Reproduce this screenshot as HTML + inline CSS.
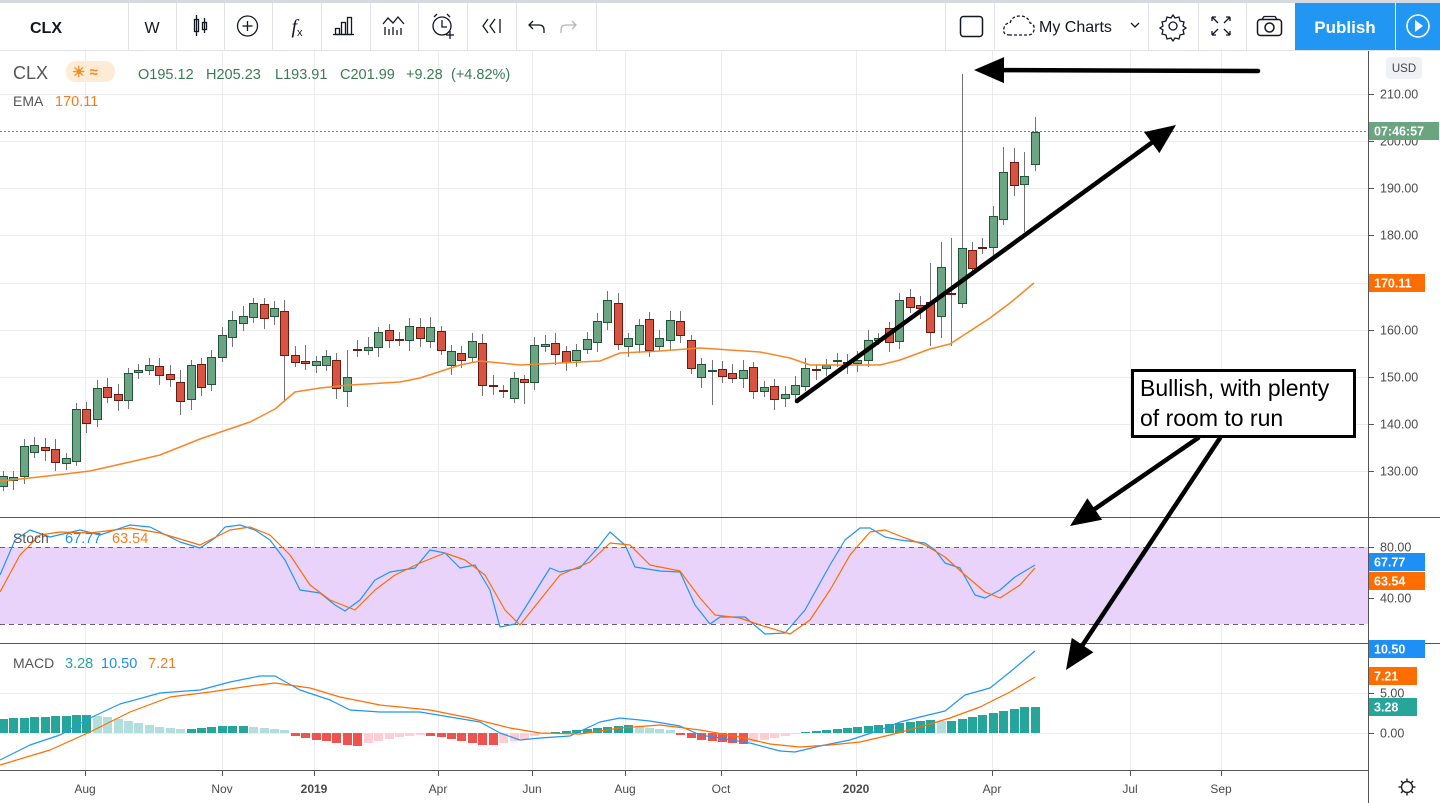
<!DOCTYPE html>
<html><head><meta charset="utf-8"><style>
html,body{margin:0;padding:0;width:1440px;height:803px;overflow:hidden;background:#fff;font-family:"Liberation Sans",sans-serif}
</style></head><body>
<svg id="s" width="1440" height="803" xmlns="http://www.w3.org/2000/svg" style="position:absolute;left:0;top:0">
</svg>
<script>
var s=document.getElementById('s'),h='';
function R(x,y,w,hh,f,st,sw){h+='<rect x="'+x+'" y="'+y+'" width="'+w+'" height="'+hh+'" fill="'+f+'"'+(st?' stroke="'+st+'" stroke-width="'+(sw||1)+'"':'')+'/>';}
function L(x1,y1,x2,y2,c,w,extra){h+='<line x1="'+x1+'" y1="'+y1+'" x2="'+x2+'" y2="'+y2+'" stroke="'+c+'" stroke-width="'+(w||1)+'" '+(extra||'')+'/>';}
function T(x,y,t,c,sz,extra){h+='<text x="'+x+'" y="'+y+'" fill="'+c+'" font-size="'+sz+'" '+(extra||'')+'>'+t+'</text>';}
function P(pts,c,w){h+='<polyline fill="none" stroke="'+c+'" stroke-width="'+(w||1)+'" stroke-linejoin="round" points="'+pts.map(function(p){return p.join(',')}).join(' ')+'"/>';}
var vx=[85,222,314,438,532,625,721,856,992,1130,1221];
vx.forEach(function(x){L(x+.5,50,x+.5,770,'#ececed');});
[94,141,188,235,283,330,377,424,471].forEach(function(y){L(0,y+.5,1368,y+.5,'#ececed');});
[598].forEach(function(y){L(0,y+.5,1368,y+.5,'#d9c3ee');});
[693,733].forEach(function(y){L(0,y+.5,1368,y+.5,'#ececed');});
L(0,131.5,1368,131.5,'#4e9a6a',1,'stroke-dasharray="2,2"');
R(0,547,1368,77,'#e9d3fb');
L(0,547.5,1368,547.5,'#6f5b7e',1,'stroke-dasharray="5,4"');
L(0,624.5,1368,624.5,'#6f5b7e',1,'stroke-dasharray="5,4"');
var d=[[476,486,'g'],[477,480,'g'],[446,476,'g'],[445,452,'g'],[447,450,'r'],[449,462,'r'],[458,463,'g'],[409,461,'g'],[409,423,'r'],[388,419,'g'],[387,397,'r'],[394,400,'r'],[373,400,'g'],[370,372,'g'],[365,370,'g'],[366,375,'r'],[374,379,'r'],[382,401,'r'],[365,399,'g'],[364,387,'r'],[357,384,'g'],[335,357,'g'],[320,337,'g'],[316,323,'g'],[303,317,'g'],[304,318,'r'],[308,316,'g'],[311,355,'r'],[355,362,'r'],[361,363,'r'],[361,365,'g'],[356,365,'g'],[360,388,'r'],[377,391,'g'],[349,350,'r'],[347,350,'g'],[332,347,'g'],[330,340,'r'],[339,340,'r'],[326,340,'g'],[327,338,'r'],[327,341,'g'],[331,350,'r'],[351,365,'g'],[353,360,'r'],[341,357,'g'],[343,385,'r'],[385,386,'r'],[390,391,'r'],[378,398,'g'],[379,382,'r'],[345,382,'g'],[344,346,'g'],[343,354,'r'],[351,362,'r'],[350,360,'g'],[339,349,'g'],[321,342,'g'],[300,322,'g'],[303,344,'r'],[338,346,'g'],[325,344,'g'],[319,350,'r'],[338,346,'g'],[320,340,'g'],[321,335,'r'],[340,368,'r'],[364,377,'g'],[370,371,'g'],[369,376,'r'],[373,378,'r'],[370,378,'g'],[367,391,'r'],[387,391,'g'],[386,399,'r'],[394,398,'g'],[385,394,'g'],[368,386,'g'],[369,370,'r'],[365,368,'g'],[360,361,'g'],[362,363,'r'],[360,363,'g'],[340,360,'g'],[338,340,'g'],[328,342,'r'],[300,341,'g'],[297,307,'r'],[305,308,'r'],[302,332,'r'],[267,316,'g'],[293,294,'r'],[248,303,'g'],[250,268,'r'],[247,248,'r'],[216,247,'g'],[172,219,'g'],[162,185,'r'],[176,184,'g'],[132,164,'g']];
var wk={92:[74,308],99:[117,171],27:[300,402],29:[345,370],33:[350,407],17:[370,415],50:[375,404],68:[360,405],96:[147,225],97:[148,196],98:[152,232],90:[242,338],89:[263,346],91:[238,346]};
d.forEach(function(c,i){var x=Math.round(3+i*10.42);var hi=c[0]-5-(i*7%6),lo=c[1]+5+(i*5%7);if(wk[i]){hi=wk[i][0];lo=wk[i][1];}
L(x+.5,hi,x+.5,lo,'#737375');
var g=c[2]=='g';R(x-3.5,c[0]+.5,8,Math.max(1,c[1]-c[0]),g?'#6ba583':'#d75442',g?'#225437':'#6b1a12');});
P([[0,481],[30,478],[65,474],[90,471],[130,462],[160,455],[200,439],[250,422],[275,409],[295,392],[320,388],[350,385],[400,382],[420,378],[460,365],[480,361],[520,365],[540,364],[600,361],[620,353],[660,351],[700,348],[760,352],[790,358],[810,365],[880,365],[900,360],[930,349],[950,344],[970,331],[990,318],[1010,303],[1034,283]],'#f68727',1.5);
P([[0,575],[15,540],[30,530],[50,537],[80,530],[100,535],[130,525],[150,527],[180,542],[200,548],[215,538],[225,527],[240,525],[255,530],[270,540],[285,560],[300,590],[320,593],[335,605],[345,611],[360,600],[375,580],[390,572],[415,568],[430,550],[445,553],[460,568],[475,565],[490,590],[500,627],[515,624],[530,600],[550,568],[560,572],[580,568],[600,545],[610,532],[625,545],[635,567],[660,571],[680,572],[695,605],[710,624],[720,617],[745,617],[765,634],[785,633],[805,610],[830,565],[845,540],[860,528],[870,528],[885,537],[900,540],[925,543],[935,550],[945,563],[960,568],[975,595],[985,598],[1000,590],[1015,577],[1035,565]],'#2196f3',1.2);
P([[0,592],[20,555],[40,535],[60,532],[90,533],[130,528],[160,533],[200,545],[230,530],[250,527],[270,535],[290,555],[310,585],[330,600],[355,610],[375,590],[395,575],[420,563],[445,553],[465,560],[485,575],[505,610],[520,625],[540,600],[560,575],[590,562],[610,543],[630,545],[650,565],[680,571],[700,598],[715,615],[740,618],[760,625],[790,634],[810,620],[830,590],[850,555],[870,532],[885,530],[905,538],[925,545],[945,557],[965,575],[985,592],[1000,598],[1020,585],[1035,568]],'#ff6d00',1.2);
var hv=[14,15,15,16,16,17,17,18,18,17,16,14,12,10,8,6,5,4,4,5,6,7,7,7,6,5,4,3,-3,-5,-7,-8,-10,-12,-13,-10,-8,-6,-4,-3,-2,-3,-4,-6,-8,-10,-12,-12,-10,-8,-6,-3,-1,1,2,3,4,5,6,7,8,7,5,4,3,-2,-5,-7,-8,-9,-10,-11,-9,-7,-5,-3,-1,1,2,3,4,5,6,7,8,9,10,11,12,13,12,12,14,16,18,20,22,24,26,26];
hv.forEach(function(v,i){var x=Math.round(3+i*10.42)-4;var pv=i?hv[i-1]:v;var c;if(v>=0)c=v>=pv?'#26a69a':'#b2dfdb';else c=v<=pv?'#ef5350':'#ffcdd2';
if(v>=0)R(x,733-v,9,v,c);else R(x,733,9,-v,c);});
P([[0,760],[30,745],[60,735],[90,718],[120,704],[160,693],[200,690],[230,682],[260,676],[275,676],[300,690],[330,700],[350,710],[380,712],[420,712],[450,717],[480,722],[500,733],[520,740],[540,738],[570,736],[600,722],[620,718],[650,721],[680,726],[700,735],[720,738],[750,743],[780,751],[795,752],[820,746],[850,740],[880,730],[900,722],[920,717],[945,711],[965,695],[990,688],[1010,672],[1035,651]],'#2196f3',1.2);
P([[0,765],[50,750],[90,732],[130,712],[170,697],[210,692],[250,686],[275,683],[310,688],[340,697],[380,705],[430,710],[470,718],[510,728],[540,733],[580,734],[620,728],[660,725],[700,730],[740,737],[770,744],[800,747],[830,745],[860,742],[890,735],[920,727],[950,718],[980,707],[1010,692],[1035,677]],'#ff6d00',1.2);
L(0,517.5,1440,517.5,'#555',1);L(0,643.5,1440,643.5,'#555',1);
L(1368.5,50,1368.5,803,'#555',1);
R(0,770.5,1368,33,'#fff');L(0,770.5,1368,770.5,'#555',1);
vx.forEach(function(x){L(x+.5,771,x+.5,776,'#555');});
var tl=['Aug','Nov','2019','Apr','Jun','Aug','Oct','2020','Apr','Jul','Sep'];
vx.forEach(function(x,i){T(x,793,tl[i],'#4a4a4a',12,'text-anchor="middle"'+((tl[i]=='2019'||tl[i]=='2020')?' font-weight="bold"':''));});
var pl=[[94,'210.00'],[141,'200.00'],[188,'190.00'],[235,'180.00'],[330,'160.00'],[377,'150.00'],[424,'140.00'],[471,'130.00'],[547,'80.00'],[598,'40.00'],[693,'5.00'],[733,'0.00']];
pl.forEach(function(p){L(1369,p[0]+.5,1374,p[0]+.5,'#555');T(1380,p[0]+4.5,p[1],'#4a4a4a',12.5);});
function box(y,t,c,w){R(1369,y-9,w||56,18,c);T(1374,y+4.5,t,'#fff',12.5,'font-weight="bold"');}
box(131,'07:46:57','#6aa57f',70);box(283,'170.11','#ff6d00');box(562,'67.77','#1e8ff5');box(581,'63.54','#ff6d00');box(649,'10.50','#1e8ff5');box(676,'7.21','#ff6d00',48);box(707,'3.28','#26a69a',48);
h+='<rect x="1386" y="57" width="36" height="22" rx="4" fill="#eef1f6"/>';T(1404,72,'USD','#444',11.5,'text-anchor="middle"');
h+='<circle cx="1407" cy="787" r="5.5" fill="none" stroke="#222" stroke-width="1.4"/>';
for(var a=0;a<8;a++){var an=a*Math.PI/4;L(1407+Math.cos(an)*6,787+Math.sin(an)*6,1407+Math.cos(an)*8.5,787+Math.sin(an)*8.5,'#222',1.4);}
T(13,79,'CLX','#555',18);
h+='<rect x="66" y="61" width="49" height="21" rx="10" fill="#fdebd5"/>';T(72,77,'☀ ≈','#f68a22',15,'font-weight="bold"');
var lg=[[138,'O195.12'],[206,'H205.23'],[275,'L193.91'],[340,'C201.99'],[406,'+9.28'],[451,'(+4.82%)']];
lg.forEach(function(q){T(q[0],79,q[1],'#3c7a55',14.5);});
T(13,106,'EMA','#555',14);T(55,106,'170.11','#f47d1c',14.5);
T(13,543,'Stoch','#555',14);T(65,543,'67.77','#1e8ff5',14.5);T(112,543,'63.54','#f47d1c',14.5);
T(13,668,'MACD','#555',14);T(65,668,'3.28','#26a69a',14.5);T(101,668,'10.50','#1e8ff5',14.5);T(148,668,'7.21','#f47d1c',14.5);
function arrow(x1,y1,x2,y2){var dx=x2-x1,dy=y2-y1,l=Math.sqrt(dx*dx+dy*dy),ux=dx/l,uy=dy/l;var bx=x2-ux*30,by=y2-uy*30;
L(x1,y1,bx+ux*4,by+uy*4,'#000',4.5,'stroke-linecap="round"');
h+='<polygon points="'+x2+','+y2+' '+(bx-uy*13)+','+(by+ux*13)+' '+(bx+uy*13)+','+(by-ux*13)+'" fill="#000"/>';}
arrow(1258,71,974,70);arrow(797,401,1176,125);arrow(1198,438,1070,526);arrow(1220,438,1066,670);
R(1132.5,370.5,222,66,'#fff','#000',3);
T(1140,396,'Bullish, with plenty','#000',23);T(1140,426,'of room to run','#000',23);
R(0,0,1440,50,'#fff');R(0,0,1440,3,'#d6d9e0');L(0,50.5,1440,50.5,'#e0e3eb');
[128,176,224,272,321,370,418,467,516,596,945,994,1148,1198,1246].forEach(function(x){L(x+.5,3,x+.5,50,'#e0e3eb');});
T(30,33,'CLX','#131722',16,'font-weight="bold"');T(152,33,'W','#131722',16,'text-anchor="middle"');
h+='<g stroke="#131722" fill="none" stroke-width="1.3"><rect x="194.5" y="19.5" width="4" height="12"/><line x1="196.5" y1="15" x2="196.5" y2="36"/><rect x="202.5" y="22.5" width="4" height="7"/><line x1="204.5" y1="18" x2="204.5" y2="33"/>'+
'<circle cx="247.5" cy="26" r="10"/><line x1="247.5" y1="21" x2="247.5" y2="31"/><line x1="242.5" y1="26" x2="252.5" y2="26"/>'+
'<rect x="335.5" y="28.5" width="4" height="6"/><rect x="341.5" y="22.5" width="4" height="12"/><rect x="347.5" y="17.5" width="4" height="17"/><line x1="333" y1="34.5" x2="354" y2="34.5"/>'+
'<polyline points="383,24 388,18 393,23 398,17 404,24"/><line x1="385" y1="27" x2="385" y2="35"/><line x1="389" y1="29" x2="389" y2="35"/><line x1="393" y1="27" x2="393" y2="35"/><line x1="397" y1="30" x2="397" y2="35"/><line x1="401" y1="28" x2="401" y2="35"/>'+
'<circle cx="442" cy="26" r="9"/><polyline points="442,20 442,27 447,27"/><path d="M434 17 l3 -3 M450 17 l-3 -3"/><line x1="450" y1="31" x2="450" y2="39"/><line x1="446" y1="35" x2="454" y2="35"/>'+
'<path d="M488 19 l-5 7 l5 7 M495 19 l-5 7 l5 7 M500 19 v14"/>'+
'<path d="M533 21 l-4 4 l4 4 M529 25 h10 q5 0 5 5 v3"/>'+
'<path d="M572 21 l4 4 l-4 4 M576 25 h-10 q-5 0 -5 5 v3" stroke="#b2b5be"/>'+
'<rect x="960.5" y="16.5" width="22" height="20" rx="3" stroke-width="1.5"/>'+
'<path d="M1010 35 q-8 0 -6 -7 q1 -5 6 -5 q2 -7 10 -7 q8 0 10 7 q5 1 4 7 q-1 5 -6 5 z" stroke-dasharray="3,2"/>'+
'<polyline points="1131,23 1135,27 1139,23"/>'+
'<circle cx="1173" cy="26" r="4"/><path d="M1173 15 l2 3 l4 -1 l1 4 l4 1 l-1 4 l3 2 l-3 2 l1 4 l-4 1 l-1 4 l-4 -1 l-2 3 l-2 -3 l-4 1 l-1 -4 l-4 -1 l1 -4 l-3 -2 l3 -2 l-1 -4 l4 -1 l1 -4 l4 1 z"/>'+
'<path d="M1212 17 l6 6 M1212 17 v4 M1212 17 h4 M1230 17 l-6 6 M1230 17 v4 M1230 17 h-4 M1212 35 l6 -6 M1212 35 v-4 M1212 35 h4 M1230 35 l-6 -6 M1230 35 v-4 M1230 35 h-4"/>'+
'<rect x="1257.5" y="19.5" width="24" height="16" rx="3" stroke-width="1.5"/><circle cx="1269.5" cy="27.5" r="4.5" stroke-width="1.5"/><path d="M1262 19.5 l2 -3 h11 l2 3"/>'+
'</g>';
T(297,33,'<tspan font-style="italic" font-family="Liberation Serif" font-size="20">f</tspan><tspan font-size="11" dy="3">x</tspan>','#131722',16,'text-anchor="middle"');
T(1039,32,'My Charts','#131722',16);
R(1295,3,100,47,'#2196f3');R(1396,3,44,47,'#2196f3');L(1395.5,3,1395.5,50,'#fff');
T(1345,33,'Publish','#fff',17,'text-anchor="middle" font-weight="bold"');
h+='<circle cx="1418" cy="26" r="11" fill="none" stroke="#fff" stroke-width="1.6"/><polygon points="1415,20 1423,26 1415,32" fill="#fff"/>';
s.innerHTML=h;
</script>
</body></html>
